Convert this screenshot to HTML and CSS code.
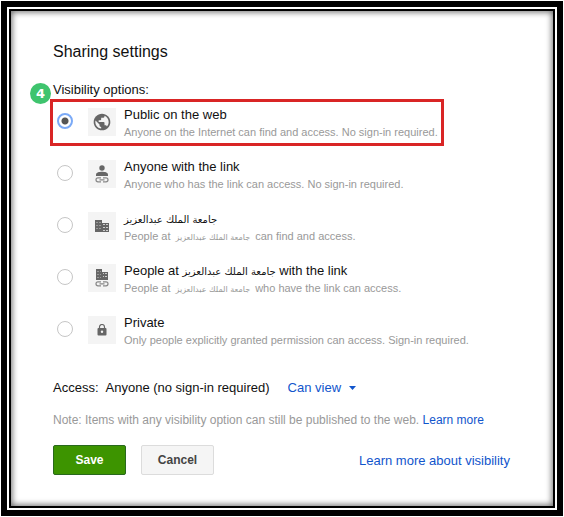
FILE: index.html
```html
<!DOCTYPE html>
<html lang="en">
<head>
  <meta charset="UTF-8">
  <meta name="viewport" content="width=device-width, initial-scale=1.0">
  <title>Sharing settings</title>
  <link rel="stylesheet" href="styles.css">
</head>
<body>
  <div class="frame">
    <form class="dialog">
      <h1>Sharing settings</h1>
      <fieldset class="options">
        <legend>Visibility options:</legend>
        <label class="option highlighted">
          <span class="step">4</span>
          <input type="radio" name="visibility" value="public" checked>
          <span class="icon">
            <svg width="20" height="20" viewBox="0 0 24 24"><path fill="#666" d="M12 2C6.48 2 2 6.48 2 12s4.48 10 10 10 10-4.480 10-10S17.520 2 12 2z"/><path fill="#f4f4f4" d="M11 19.930c-3.950-.49-7-3.850-7-7.930 0-.62.080-1.210.21-1.790L9 15v1c0 1.100.9 2 2 2v1.930zm6.900-2.540c-.26-.81-1-1.390-1.900-1.390h-1v-3c0-.55-.45-1-1-1H8v-2h2c.55 0 1-.45 1-1V7h2c1.100 0 2-.9 2-2v-.41c2.930 1.190 5 4.060 5 7.410 0 2.080-.8 3.970-2.100 5.390z"/></svg>
          </span>
          <span class="text">
            <span class="name">Public on the web</span>
            <span class="description">Anyone on the Internet can find and access. No sign-in required.</span>
          </span>
        </label>
        <label class="option">
          <input type="radio" name="visibility" value="link">
          <span class="icon">
            <svg width="14" height="18" viewBox="0 0 14 18">
              <circle cx="7" cy="3" r="2.700" fill="#666"/>
              <path fill="#666" d="M1 11V9.500C1 7.500 4.500 6.800 7 6.800s6 .7 6 2.700V11z"/>
              <path fill="none" stroke="#888" stroke-width="1.200" d="M6 12.800H3a2 2 0 0 0 0 4h3M8 12.800h3a2 2 0 0 1 0 4H8M4.500 14.800h5"/>
            </svg>
          </span>
          <span class="text">
            <span class="name">Anyone with the link</span>
            <span class="description">Anyone who has the link can access. No sign-in required.</span>
          </span>
        </label>
        <label class="option">
          <input type="radio" name="visibility" value="domain">
          <span class="icon">
            <svg width="14" height="12" viewBox="0 0 14 12">
              <path fill="#666" d="M0 0h7v3h7v9H0z"/>
              <path stroke="#999" d="M1 2.500h2M4 2.500h2M1 5.500h2M4 5.500h2M1 8.500h2M4 8.500h2"/>
              <path stroke="#ccc" d="M8 4.500h5M8 7.500h5M8 10.500h5"/>
              <path stroke="#666" d="M10.500 3v9"/>
            </svg>
          </span>
          <span class="text">
            <span class="name"><bdi lang="ar">جامعة الملك عبدالعزيز</bdi></span>
            <span class="description">People at <bdi lang="ar">جامعة الملك عبدالعزيز</bdi> can find and access.</span>
          </span>
        </label>
        <label class="option">
          <input type="radio" name="visibility" value="domain-link">
          <span class="icon">
            <svg width="14" height="18" viewBox="0 0 14 18">
              <path fill="#666" d="M1 0h6v3h6v8H1z"/>
              <path stroke="#999" d="M2 2.500h2M5 2.500h1M2 5.500h2M5 5.500h1M2 8.500h2M5 8.500h1"/>
              <path stroke="#ccc" d="M8 4.500h4M8 7.500h4"/>
              <path stroke="#666" d="M9.500 3v8"/>
              <path fill="none" stroke="#888" stroke-width="1.200" d="M6 12.800H3a2 2 0 0 0 0 4h3M8 12.800h3a2 2 0 0 1 0 4H8M4.500 14.800h5"/>
            </svg>
          </span>
          <span class="text">
            <span class="name">People at <bdi lang="ar">جامعة الملك عبدالعزيز</bdi> with the link</span>
            <span class="description">People at <bdi lang="ar">جامعة الملك عبدالعزيز</bdi> who have the link can access.</span>
          </span>
        </label>
        <label class="option">
          <input type="radio" name="visibility" value="private">
          <span class="icon">
            <svg width="10" height="12" viewBox="0 0 10 12">
              <rect x="0.500" y="4" width="9" height="7.500" rx="1" fill="#666"/>
              <path fill="none" stroke="#666" stroke-width="1.200" d="M2.500 4.500V3a2.500 2.500 0 0 1 5 0v1.500"/>
              <circle cx="5" cy="7.700" r="1.200" fill="#f4f4f4"/>
            </svg>
          </span>
          <span class="text">
            <span class="name">Private</span>
            <span class="description">Only people explicitly granted permission can access. Sign-in required.</span>
          </span>
        </label>
      </fieldset>
      <div class="access">
        <label for="access-level">Access:</label>
        <span class="who">Anyone (no sign-in required)</span>
        <span class="level">
          <select id="access-level">
            <option>Can view</option>
          </select>
          <svg width="7" height="4" viewBox="0 0 7 4"><path fill="#15c" d="M0 0h7L3.500 4z"/></svg>
        </span>
      </div>
      <p class="note">Note: Items with any visibility option can still be published to the web. <a href="#">Learn more</a></p>
      <div class="actions">
        <button type="submit" class="save">Save</button>
        <button type="button">Cancel</button>
        <a href="#">Learn more about visibility</a>
      </div>
    </form>
  </div>
</body>
</html>
```
FILE: styles.css
```css
* {
  box-sizing: border-box;
}
body {
  display: flex;
  min-height: 100vh;
  margin: 0;
  padding: 1px;
  background-color: #fff;
  font-family: "Liberation Sans", Arial, sans-serif;
  font-size: 13px;
  color: #111;
}
.frame {
  display: flex;
  flex: 1;
  border: 6px solid #000;
  padding: 2px;
}
.dialog {
  flex: 1;
  border: 2px solid #000;
  padding: 30px 43px 30px 42px;
  box-shadow: inset 0 0 6px 1px rgba(0, 0, 0, 0.6);
}
h1 {
  margin: 0 0 19px;
  font-size: 16px;
  font-weight: normal;
  line-height: 22px;
}
.options {
  display: flex;
  flex-direction: column;
  gap: 5px;
  margin: 0;
  border: 0;
  padding: 0;
}
legend {
  padding: 0 0 1px;
  line-height: 16px;
}
.option {
  position: relative;
  display: flex;
  align-items: flex-start;
  width: fit-content;
  height: 47px;
  margin-left: -3px;
  border: 3px solid transparent;
  padding: 0 3px 0 4px;
  white-space: nowrap;
}
.highlighted {
  border-color: #d92525;
}
.step {
  position: absolute;
  top: -19px;
  left: -23px;
  width: 21px;
  height: 21px;
  border-radius: 50%;
  background-color: #3fc46e;
  color: #fff;
  font-family: "DejaVu Sans", Verdana, sans-serif;
  font-size: 13px;
  font-weight: bold;
  line-height: 21px;
  text-align: center;
}
input {
  appearance: none;
  width: 16px;
  height: 16px;
  margin: 11px 15px 0 0;
  border: 1px solid #c6c6c6;
  border-radius: 50%;
}
input:checked {
  border: 2px solid #7baaf7;
  background: radial-gradient(circle, #555 3px, #fff 4px);
}
.icon {
  display: flex;
  align-items: center;
  justify-content: center;
  width: 28px;
  height: 28px;
  margin: 6px 8px 0 0;
  background-color: #f4f4f4;
}
.text {
  padding-top: 4px;
}
.name,
.description {
  display: block;
}
.name {
  line-height: 18px;
}
.description {
  color: #999;
  font-size: 11px;
  line-height: 16px;
}
bdi {
  font-family: "DejaVu Sans", sans-serif;
  font-size: 10px;
  line-height: 1;
}
.description bdi {
  margin: 0 2px;
  font-size: 8px;
}
.access {
  display: flex;
  align-items: center;
  margin-top: 24px;
  line-height: 20px;
}
.who {
  margin: 0 18px 0 7px;
}
.level {
  display: flex;
  align-items: center;
  gap: 7px;
}
select {
  appearance: none;
  border: 0;
  padding: 0;
  background: none;
  color: #15c;
  font: inherit;
}
.note {
  margin: 14px 0 17px;
  color: #999;
  font-size: 12px;
  line-height: 16px;
}
a {
  color: #15c;
  text-decoration: none;
}
.actions {
  display: flex;
  align-items: center;
  gap: 15px;
}
.actions a {
  margin-left: auto;
}
button {
  width: 73px;
  height: 30px;
  border: 1px solid #dcdcdc;
  border-radius: 2px;
  background-color: #f5f5f5;
  color: #444;
  font-family: inherit;
  font-size: 12px;
  font-weight: bold;
}
.save {
  border-color: #29691d;
  background-color: #3d9400;
  color: #fff;
}
```
